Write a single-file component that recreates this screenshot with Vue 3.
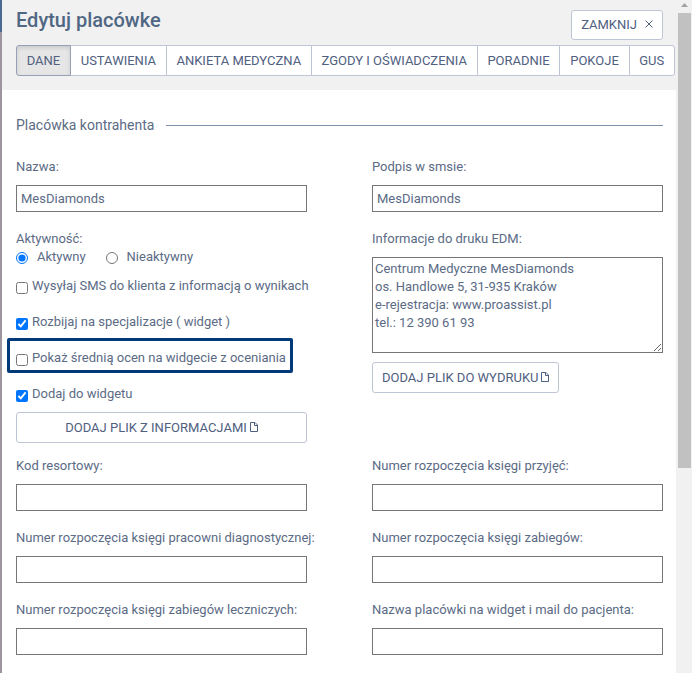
<template>
  <div class="page">
    <div class="edge"></div>

    <main class="panel">
      <header class="header">
        <div class="header-top">
          <h1>Edytuj placówke</h1>
          <button type="button" class="btn btn-close">
            ZAMKNIJ
            <svg width="8" height="8" viewBox="0 0 8 8" aria-hidden="true">
              <path d="M0.5 0.5 L7.5 7.5 M7.5 0.5 L0.5 7.5" />
            </svg>
          </button>
        </div>
        <nav class="tabs">
          <button
            v-for="tab in tabs"
            :key="tab"
            type="button"
            class="tab"
            :class="{ active: tab === activeTab }"
            @click="activeTab = tab"
          >{{ tab }}</button>
        </nav>
      </header>

      <form class="content" @submit.prevent>
        <h2 class="section-title"><span>Placówka kontrahenta</span></h2>

        <div class="grid">
          <div class="field">
            <label for="name">Nazwa:</label>
            <input id="name" v-model="name" type="text" />
          </div>
          <div class="field">
            <label for="signature">Podpis w smsie:</label>
            <input id="signature" v-model="signature" type="text" />
          </div>

          <div class="options">
            <div id="activity">Aktywność:</div>
            <div class="radios" role="radiogroup" aria-labelledby="activity">
              <label><input v-model="activity" type="radio" name="activity" value="on" />Aktywny</label>
              <label><input v-model="activity" type="radio" name="activity" value="off" />Nieaktywny</label>
            </div>
            <div class="checks">
              <label v-for="item in checks" :key="item.text" class="check" :class="{ marked: item.marked }">
                <input v-model="item.on" type="checkbox" />{{ item.text }}
              </label>
            </div>
            <button type="button" class="btn btn-wide">
              DODAJ PLIK Z INFORMACJAMI
              <svg width="8" height="10" viewBox="0 0 8 10" aria-hidden="true">
                <path d="M0.5 0.5 H5 L7.5 3 V9.5 H0.5 Z M4.5 0.5 V3.5 H7.5" />
              </svg>
            </button>
          </div>

          <div class="print">
            <label for="print-info">Informacje do druku EDM:</label>
            <textarea id="print-info" v-model="printInfo"></textarea>
            <button type="button" class="btn">
              DODAJ PLIK DO WYDRUKU
              <svg width="8" height="10" viewBox="0 0 8 10" aria-hidden="true">
                <path d="M0.5 0.5 H5 L7.5 3 V9.5 H0.5 Z M4.5 0.5 V3.5 H7.5" />
              </svg>
            </button>
          </div>

          <div v-for="field in fields" :key="field.id" class="field">
            <label :for="field.id">{{ field.label }}</label>
            <input :id="field.id" v-model="field.value" type="text" />
          </div>
        </div>
      </form>
    </main>

    <div class="scrollbar" aria-hidden="true">
      <svg width="7" height="4" viewBox="0 0 7 4"><path d="M0 4 L3.5 0 L7 4 Z" /></svg>
      <div class="track"><div class="thumb"></div></div>
    </div>
  </div>
</template>

<script setup>
import { ref } from 'vue'

const tabs = ['DANE', 'USTAWIENIA', 'ANKIETA MEDYCZNA', 'ZGODY I OŚWIADCZENIA', 'PORADNIE', 'POKOJE', 'GUS']
const activeTab = ref('DANE')

const name = ref('MesDiamonds')
const signature = ref('MesDiamonds')
const activity = ref('on')
const printInfo = ref('Centrum Medyczne MesDiamonds\nos. Handlowe 5, 31-935 Kraków\ne-rejestracja: www.proassist.pl\ntel.: 12 390 61 93')

const checks = ref([
  { text: 'Wysyłaj SMS do klienta z informacją o wynikach', on: false },
  { text: 'Rozbijaj na specjalizacje ( widget )', on: true },
  { text: 'Pokaż średnią ocen na widgecie z oceniania', on: false, marked: true },
  { text: 'Dodaj do widgetu', on: true }
])

const fields = ref([
  { id: 'code', label: 'Kod resortowy:', value: '' },
  { id: 'admissions', label: 'Numer rozpoczęcia księgi przyjęć:', value: '' },
  { id: 'diagnostics', label: 'Numer rozpoczęcia księgi pracowni diagnostycznej:', value: '' },
  { id: 'procedures', label: 'Numer rozpoczęcia księgi zabiegów:', value: '' },
  { id: 'treatments', label: 'Numer rozpoczęcia księgi zabiegów leczniczych:', value: '' },
  { id: 'widget-name', label: 'Nazwa placówki na widget i mail do pacjenta:', value: '' }
])
</script>

<style>
body {
  background: #fff;
}
</style>

<style scoped>
.page {
  display: flex;
  min-height: 100vh;
  font-family: Roboto, sans-serif;
  font-size: 13px;
  line-height: 18px;
  color: #5b6b85;
}

.page * {
  box-sizing: border-box;
}

.edge {
  width: 2px;
  background: linear-gradient(#4a6890 32px, #9d949d 32px);
}

.panel {
  flex: 1;
  min-width: 0;
}

.header {
  padding: 10px 13px 14px 14px;
  background: #f1f1f1;
}

.header-top {
  display: flex;
  justify-content: space-between;
  align-items: flex-start;
  margin-bottom: 5px;
}

h1 {
  margin: 0;
  font-size: 20px;
  font-weight: 500;
  line-height: 20px;
  color: #506784;
}

.btn,
.tab {
  font: inherit;
  color: #506080;
  background: #fff;
  border: 1px solid #bfc5d4;
  white-space: nowrap;
}

.btn {
  display: flex;
  align-items: center;
  justify-content: center;
  gap: 3px;
  height: 31px;
  padding: 0 9px;
  border-radius: 3px;
}

.btn svg {
  margin-bottom: 2px;
  fill: none;
  stroke: #506080;
}

.btn-close {
  gap: 8px;
  height: 30px;
}

.btn-wide {
  width: 100%;
}

.tabs {
  display: flex;
  margin-right: -12px;
}

.tab {
  flex: 1 0 auto;
  height: 31px;
  padding: 0 8px;
  margin-left: -1px;
}

.tab:first-child {
  margin-left: 0;
  border-radius: 3px 0 0 3px;
}

.tab:last-child {
  border-radius: 0 3px 3px 0;
}

.tab.active {
  position: relative;
  background: #e6e6e6;
  border-color: #94a1b6;
  box-shadow: inset 0 2px 4px rgba(0, 0, 0, 0.12);
}

.content {
  padding: 26px 13px 18px 14px;
}

.section-title {
  display: flex;
  align-items: center;
  gap: 12px;
  margin: 0 0 24px;
  font-size: 14px;
  font-weight: 400;
  line-height: 18px;
}

.section-title::after {
  content: '';
  flex: 1;
  height: 1px;
  background: #7f8fab;
}

.grid {
  display: grid;
  grid-template-columns: repeat(2, minmax(0, 1fr));
  column-gap: 65px;
  row-gap: 18px;
}

.field {
  display: flex;
  flex-direction: column;
  gap: 9px;
}

.field label {
  white-space: nowrap;
}

.field input,
textarea {
  width: 100%;
  font: inherit;
  color: inherit;
  background: #fff;
  border: 1px solid #767676;
  border-radius: 0;
}

.field input {
  height: 27px;
  padding: 0 4px;
}

.options {
  margin-bottom: -4px;
}

.radios {
  display: flex;
  gap: 20px;
  margin-bottom: 11px;
}

.radios label,
.check {
  display: flex;
  white-space: nowrap;
}

.radios input {
  width: 12px;
  height: 12px;
  margin: 4px 9px 0 0;
}

.checks {
  display: flex;
  flex-direction: column;
  align-items: flex-start;
  gap: 18px;
  margin-bottom: 9px;
}

.check {
  position: relative;
}

.check input {
  width: 12px;
  height: 12px;
  margin: 5px 4px 0 0;
}

.marked::after {
  content: '';
  position: absolute;
  inset: -11px -7px -6px -9px;
  border: 3px solid #003a78;
  border-radius: 2px;
  pointer-events: none;
}

.print label,
textarea {
  display: block;
}

textarea {
  height: 96px;
  margin: 9px 0;
  padding: 2px;
  resize: vertical;
}

.scrollbar {
  display: flex;
  flex-direction: column;
  align-items: center;
  gap: 6px;
  width: 16px;
  padding-top: 3px;
  background: #f1f1f1;
}

.scrollbar svg {
  flex: none;
  fill: #a3a3a3;
}

.track {
  flex: 1;
  width: 13px;
}

.thumb {
  height: 69%;
  background: #c1c1c1;
}
</style>
